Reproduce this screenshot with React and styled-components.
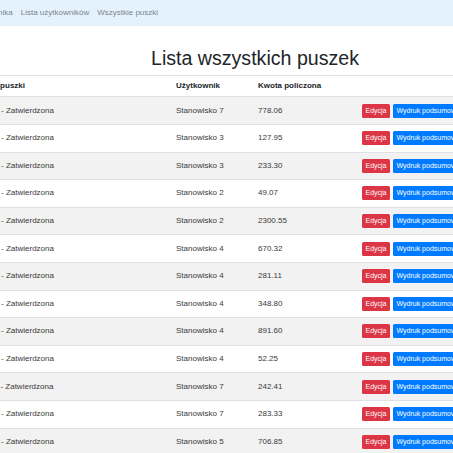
import React from "react";
import styled, { createGlobalStyle } from "styled-components";

const Global = createGlobalStyle`
  html, body {
    margin: 0;
    padding: 0;
    background: #fff;
    overflow: hidden;
  }
  body {
    font-family: "Liberation Sans", Arial, sans-serif;
    color: #212529;
  }
`;

const Navbar = styled.nav`
  height: 26px;
  background: #e3f2fd;
  display: flex;
  align-items: center;
  overflow: hidden;
`;

const NavList = styled.div`
  display: flex;
  margin-left: -58px;
`;

const NavLink = styled.a`
  font-size: 8px;
  line-height: 12px;
  padding: 0 4px;
  color: rgba(0, 0, 0, 0.5);
  text-decoration: none;
  white-space: nowrap;
`;

const Page = styled.div`
  width: 578px;
  margin-left: -34px;
`;

const Title = styled.h1`
  margin: 20px 0 5px;
  font-size: 19.6px;
  line-height: 24px;
  font-weight: 400;
  text-align: center;
  color: #212529;
`;

const Table = styled.table`
  width: 100%;
  table-layout: fixed;
  border-collapse: collapse;
  font-size: 8px;
  line-height: 12px;
`;

const Th = styled.th`
  text-align: left;
  font-weight: 700;
  padding: 4.2px 7px;
  border-top: 1px solid #dee2e6;
  border-bottom: 1px solid #dee2e6;
  color: #212529;
  white-space: nowrap;
`;

const Row = styled.tr`
  background: ${(p) => (p.$striped ? "#f2f2f2" : "#fff")};
`;

const Td = styled.td`
  padding: 6.3px 7px;
  border-top: 1px solid #dee2e6;
  color: #3a3a3a;
  vertical-align: middle;
  white-space: nowrap;
  overflow: hidden;
`;

const Actions = styled.div`
  display: flex;
  gap: 3px;
`;

const Button = styled.button`
  border: none;
  border-radius: 1.5px;
  padding: 2px 3.5px;
  font-family: "Liberation Sans", Arial, sans-serif;
  font-size: 7px;
  line-height: 10px;
  color: #fff;
  background: ${(p) => (p.$variant === "danger" ? "#dc3545" : "#007bff")};
  white-space: nowrap;
  cursor: pointer;
`;

const rows = [
  ["Stanowisko 7", "778.06"],
  ["Stanowisko 3", "127.95"],
  ["Stanowisko 3", "233.30"],
  ["Stanowisko 2", "49.07"],
  ["Stanowisko 2", "2300.55"],
  ["Stanowisko 4", "670.32"],
  ["Stanowisko 4", "281.11"],
  ["Stanowisko 4", "348.80"],
  ["Stanowisko 4", "891.60"],
  ["Stanowisko 4", "52.25"],
  ["Stanowisko 7", "242.41"],
  ["Stanowisko 7", "283.33"],
  ["Stanowisko 5", "706.85"],
];

export default function App() {
  return (
    <>
      <Global />
      <Navbar>
        <NavList>
          <NavLink href="#">Dodaj użytkownika</NavLink>
          <NavLink href="#">Lista użytkowników</NavLink>
          <NavLink href="#">Wszystkie puszki</NavLink>
        </NavList>
      </Navbar>
      <Page>
        <Title>Lista wszystkich puszek</Title>
        <Table>
          <colgroup>
            <col style={{ width: 203 }} />
            <col style={{ width: 82 }} />
            <col style={{ width: 104 }} />
            <col style={{ width: 189 }} />
          </colgroup>
          <thead>
            <tr>
              <Th>Nazwa puszki</Th>
              <Th>Użytkownik</Th>
              <Th>Kwota policzona</Th>
              <Th></Th>
            </tr>
          </thead>
          <tbody>
            {rows.map(([user, amount], i) => (
              <Row key={i} $striped={i % 2 === 0}>
                <Td>P-{String(i + 1).padStart(4, "0")} - Zatwierdzona</Td>
                <Td>{user}</Td>
                <Td>{amount}</Td>
                <Td>
                  <Actions>
                    <Button $variant="danger">Edycja</Button>
                    <Button>Wydruk podsumowania</Button>
                  </Actions>
                </Td>
              </Row>
            ))}
          </tbody>
        </Table>
      </Page>
    </>
  );
}
